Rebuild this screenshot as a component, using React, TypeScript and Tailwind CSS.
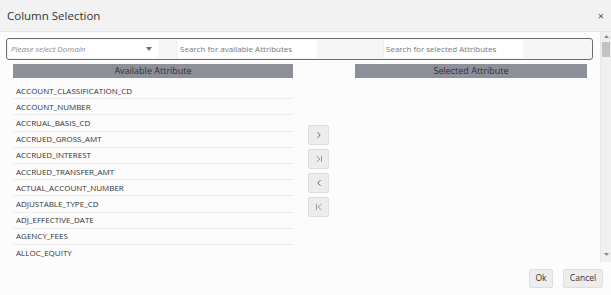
import { ChevronLeft, ChevronRight } from 'lucide-react';

const attributes = [
  'ACCOUNT_CLASSIFICATION_CD',
  'ACCOUNT_NUMBER',
  'ACCRUAL_BASIS_CD',
  'ACCRUED_GROSS_AMT',
  'ACCRUED_INTEREST',
  'ACCRUED_TRANSFER_AMT',
  'ACTUAL_ACCOUNT_NUMBER',
  'ADJUSTABLE_TYPE_CD',
  'ADJ_EFFECTIVE_DATE',
  'AGENCY_FEES',
  'ALLOC_EQUITY',
];

function MoveAllIcon({ left }: { left?: boolean }) {
  return (
    <svg width="8" height="8" viewBox="0 0 8 8" fill="none" stroke="#9a9a9a" strokeWidth="1">
      {left ? (
        <>
          <path d="M1.5 1v6" />
          <path d="M6.5 1L3 4l3.5 3" />
        </>
      ) : (
        <>
          <path d="M1.5 1L5 4 1.5 7" />
          <path d="M6.5 1v6" />
        </>
      )}
    </svg>
  );
}

function ShuttleButton({ children }: { children: React.ReactNode }) {
  return (
    <button className="w-[21px] h-[20px] rounded-[2px] border border-[#dedede] bg-[#ededed] flex items-center justify-center">
      {children}
    </button>
  );
}

export default function App() {
  return (
    <div className="w-[611px] h-[295px] flex flex-col bg-[#fcfcfc] text-[#333] font-['Open_Sans',sans-serif] overflow-hidden">
      <div className="h-[32px] shrink-0 bg-[#f2f2f2] border-b border-[#e4e4e4] flex items-center justify-between pl-[7px] pr-[7px]">
        <div className="text-[11.5px] text-[#333]">Column Selection</div>
        <span className="text-[11px] text-[#555] leading-none">×</span>
      </div>

      <div className="h-[230px] shrink-0 flex">
        <div className="flex-1 pt-[6px]">
          <div className="ml-[6px] w-[587px] h-[22px] rounded-[3px] border border-[#6b6b6b] bg-[#f6f6f6] flex items-center">
            <div className="ml-[1px] w-[150px] h-[18px] bg-white flex items-center justify-between pl-[3px] pr-[6px]">
              <span className="text-[8px] italic text-[#8a8a8a]">Please select Domain</span>
              <svg width="6" height="4" viewBox="0 0 6 4">
                <path d="M0 0h6L3 4z" fill="#707070" />
              </svg>
            </div>
            <div className="ml-[18px] w-[141px] h-[18px] bg-white border-l border-[#eeeeee] flex items-center pl-[3px]">
              <span className="text-[8px] text-[#777]">Search for available Attributes</span>
            </div>
            <div className="ml-[66px] w-[140px] h-[18px] bg-white border-l border-[#eeeeee] flex items-center pl-[2px]">
              <span className="text-[8px] text-[#777]">Search for selected Attributes</span>
            </div>
          </div>

          <div className="mt-[4px] flex items-start">
            <div className="ml-[13px] w-[280px]">
              <div className="h-[14px] bg-[#8e9099] text-[9px] text-[#2f2f2f] flex items-center justify-center">
                Available Attribute
              </div>
              <div className="mt-[5px]">
                {attributes.map((a, i) => (
                  <div
                    key={a}
                    className={`h-[16.2px] flex items-center pl-[3px] text-[8px] text-[#333] ${
                      i < attributes.length - 1 ? 'border-b border-[#ececec]' : ''
                    }`}
                  >
                    {a}
                  </div>
                ))}
              </div>
            </div>

            <div className="ml-[15px] mt-[61px] flex flex-col gap-[4px]">
              <ShuttleButton>
                <ChevronRight className="w-[10px] h-[10px] text-[#555]" strokeWidth={2.2} />
              </ShuttleButton>
              <ShuttleButton>
                <MoveAllIcon />
              </ShuttleButton>
              <ShuttleButton>
                <ChevronLeft className="w-[10px] h-[10px] text-[#555]" strokeWidth={2.2} />
              </ShuttleButton>
              <ShuttleButton>
                <MoveAllIcon left />
              </ShuttleButton>
            </div>

            <div className="ml-[26px] w-[232px]">
              <div className="h-[14px] bg-[#8e9099] text-[9px] text-[#2f2f2f] flex items-center justify-center">
                Selected Attribute
              </div>
            </div>
          </div>
        </div>

        <div className="w-[11px] bg-[#f0f0f0] border-l border-[#e6e6e6] flex flex-col items-center">
          <svg className="mt-[3px]" width="5" height="3" viewBox="0 0 5 3">
            <path d="M0 3h5L2.5 0z" fill="#8a8a8a" />
          </svg>
          <div className="mt-[4px] w-[8px] h-[15px] bg-[#c2c2c2]" />
          <div className="flex-1" />
          <svg className="mb-[6px]" width="5" height="3" viewBox="0 0 5 3">
            <path d="M0 0h5L2.5 3z" fill="#8a8a8a" />
          </svg>
        </div>
      </div>

      <div className="flex-1 flex items-center justify-end gap-[10px] pr-[8px] pb-[1px]">
        <button className="w-[24px] h-[19px] rounded-[2px] border border-[#dedede] bg-[#ededed] text-[8.5px] text-[#333]">
          Ok
        </button>
        <button className="w-[40px] h-[19px] rounded-[2px] border border-[#dedede] bg-[#ededed] text-[8.5px] text-[#333]">
          Cancel
        </button>
      </div>
    </div>
  );
}
